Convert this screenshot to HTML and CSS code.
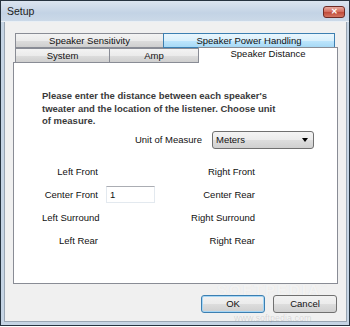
FILE: index.html
```html
<!DOCTYPE html>
<html lang="en">
<head>
    <meta charset="UTF-8">
    <title>Setup</title>
    <link rel="stylesheet" href="styles.css">
</head>
<body>

<div class="window">
    <div class="titlebar">
        <span class="title">Setup</span>
        <span class="close">&#x2715;</span>
    </div>

    <div class="client">
        <div class="tabs">
            <div class="tab-row">
                <div class="tab w-sens">Speaker Sensitivity</div>
                <div class="tab tab-hover w-power">Speaker Power Handling</div>
            </div>
            <div class="tab-row tab-row-front">
                <div class="tab w-system">System</div>
                <div class="tab w-amp">Amp</div>
                <div class="tab tab-active w-dist">Speaker Distance</div>
            </div>
        </div>

        <div class="panel">
            <p class="intro">Please enter the distance between each speaker's<br>tweater and the location of the listener. Choose unit<br>of measure.</p>

            <div class="unit-row">
                <span class="label">Unit of Measure</span>
                <div class="combo">
                    <span>Meters</span>
                    <span class="arrow"></span>
                </div>
            </div>

            <div class="speakers">
                <span class="label">Left Front</span>
                <span></span>
                <span class="label">Right Front</span>

                <span class="label">Center Front</span>
                <div class="text-box">1</div>
                <span class="label">Center Rear</span>

                <span class="label">Left Surround</span>
                <span></span>
                <span class="label">Right Surround</span>

                <span class="label">Left Rear</span>
                <span></span>
                <span class="label">Right Rear</span>
            </div>
        </div>

        <div class="btn-box">
            <div class="btn btn-default">OK</div>
            <div class="btn">Cancel</div>
        </div>

        <!-- watermark over the dialog -->
        <div class="mark">SOFTPEDIA<sup>&trade;</sup></div>
        <div class="mark-url">www.softpedia.com</div>
    </div>
</div>

</body>
</html>
```

FILE: styles.css
```css
body{
    margin: 0;
    background: #fff;
    font-family: "Liberation Sans", Arial, sans-serif;
    font-size: 9.5px;
    color: #111;
}

.window{
    width: 350px;
    height: 326px;
    box-sizing: border-box;
    border: 1px solid #26333f;
    background: #c5d4e4;
    display: flex;
    flex-direction: column;
}

.titlebar{
    height: 20px;
    display: flex;
    align-items: center;
    justify-content: space-between;
    padding: 0 4px 0 6px;
    background: linear-gradient(to bottom, #dbe5ef, #c3d3e5 60%, #cbd9e8);
    border-bottom: 1px solid #e9eff5;
}
.title{
    font-size: 10.5px;
    color: #1b1b1b;
}
.close{
    width: 22px;
    height: 12px;
    margin-top: 2px;
    box-sizing: border-box;
    border: 1px solid #6e2b25;
    border-radius: 3px;
    background: linear-gradient(to bottom, #e7a99e, #d26a5a 50%, #c04a38 51%, #d47562);
    color: #fff;
    font-size: 8px;
    font-weight: bold;
    line-height: 10px;
    text-align: center;
}

.client{
    position: relative;
    flex: 1;
    margin: 0 2px 3px 3px;
    background: #f0f0f0;
    border: 1px solid #9aa6b3;
    border-top: none;
    padding-top: 11px;
}

/* -------------------------- tabs ---------------------------- */
.tabs{
    margin-left: 10px;
}
.tab-row{
    display: flex;
    height: 15px;
}
.tab-row-front{
    height: 14px;
    align-items: flex-end;
}
.tab{
    box-sizing: border-box;
    height: 15px;
    border: 1px solid #898c95;
    background: linear-gradient(to bottom, #f3f3f3, #ebebeb 50%, #dddddd 51%, #cfcfcf);
    text-align: center;
    line-height: 13px;
    margin-left: -1px;
}
.tab:first-child{
    margin-left: 0;
}
.tab-row-front .tab{
    height: 14px;
    border-bottom: none;
}
.tab-hover{
    border-color: #3c7fb1;
    background: linear-gradient(to bottom, #eaf6fd, #d9f0fc 50%, #bee6fd 51%, #a7d9f5);
    position: relative;
}
.tab-row-front .tab-active{
    position: relative;
    height: 16px;
    margin-bottom: -1px;
    background: #fff;
    line-height: 12px;
}

.w-sens{ width: 149px; }
.w-power{ width: 172px; }
.w-system{ width: 95px; }
.w-amp{ width: 90px; }
.w-dist{ width: 140px; }

/* -------------------------- panel ---------------------------- */
.panel{
    box-sizing: border-box;
    width: 325px;
    height: 222px;
    margin-left: 8px;
    border: 1px solid #898c95;
    background: #fff;
    padding: 27px 0 0 28px;
}

.intro{
    margin: 0;
    font-weight: bold;
    line-height: 12.5px;
    color: #3a3a3a;
}

.unit-row{
    display: flex;
    align-items: center;
    justify-content: flex-end;
    gap: 10px;
    margin: 3px 23px 0 0;
}
.combo{
    box-sizing: border-box;
    width: 102px;
    height: 18px;
    border: 1px solid #707070;
    border-radius: 3px;
    background: linear-gradient(to bottom, #f4f4f4, #ebebeb 50%, #dddddd 51%, #d0d0d0);
    display: flex;
    align-items: center;
    justify-content: space-between;
    padding: 0 5px 0 3px;
}
.arrow{
    width: 0;
    height: 0;
    border-left: 3.5px solid transparent;
    border-right: 3.5px solid transparent;
    border-top: 4px solid #000;
}

.speakers{
    display: grid;
    grid-template-columns: 56px 49px 92px;
    grid-auto-rows: 23px;
    column-gap: 8px;
    align-items: center;
    margin-top: 11px;
}
.speakers .label{
    text-align: right;
    white-space: nowrap;
}
.text-box{
    box-sizing: border-box;
    height: 17px;
    border: 1px solid #e3e9ef;
    border-top-color: #abadb3;
    padding-left: 3px;
    line-height: 15px;
    background: #fff;
}

/* -------------------------- buttons ---------------------------- */
.btn-box{
    display: flex;
    justify-content: flex-end;
    gap: 8px;
    margin: 11px 9px 0 0;
}
.btn{
    box-sizing: border-box;
    width: 64px;
    height: 18px;
    border: 1px solid #707070;
    border-radius: 3px;
    background: linear-gradient(to bottom, #f2f2f2, #ebebeb 50%, #dddddd 51%, #cfcfcf);
    text-align: center;
    line-height: 16px;
}
.btn-default{
    border-color: #3c7fb1;
    box-shadow: inset 0 0 0 1px #a6d6f5;
}

/* -------------------------- watermark ---------------------------- */
.mark{
    position: absolute;
    left: 212px;
    top: 262px;
    font-size: 15px;
    line-height: 11px;
    font-weight: bold;
    letter-spacing: 2px;
    color: rgba(255, 255, 255, 0.6);
    text-shadow: 0 0 1px rgba(0, 0, 0, 0.07);
}
.mark sup{
    font-size: 6px;
    line-height: 6px;
    vertical-align: top;
}
.mark-url{
    position: absolute;
    left: 229px;
    top: 292px;
    font-size: 9px;
    line-height: 9px;
    color: rgba(0, 0, 0, 0.12);
}
```
